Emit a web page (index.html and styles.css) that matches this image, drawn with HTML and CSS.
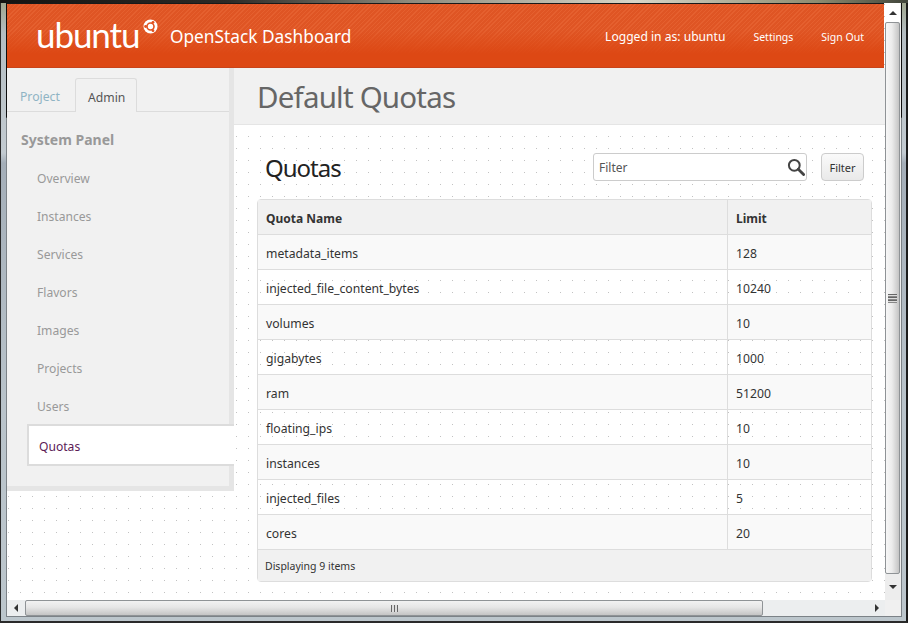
FILE: index.html
```html
<!DOCTYPE html>
<html lang="en">
<head>
<meta charset="utf-8">
<title>Default Quotas</title>
<link rel="stylesheet" href="styles.css">
</head>
<body>
<div class="desktop-strip"></div>
<div class="window">
  <div class="frame-inner">
  <div class="viewport-row">
    <div class="viewport">
      <header class="topbar">
        <div class="brand">
          <span class="wordmark">ubuntu</span>
          <svg class="cof" width="15" height="15" viewBox="0 0 15 15"><circle cx="7.5" cy="7.5" r="7" fill="#fff"/><circle cx="7.5" cy="7.5" r="3.5" fill="none" stroke="#e2521f" stroke-width="1.6"/><circle cx="2.6" cy="7.5" r="1.4" fill="#e2521f"/><circle cx="10" cy="3.3" r="1.4" fill="#e2521f"/><circle cx="10" cy="11.7" r="1.4" fill="#e2521f"/></svg>
          <span class="product">OpenStack Dashboard</span>
        </div>
        <nav class="usernav">
          <span class="logged">Logged in as: ubuntu</span>
          <a class="navlink">Settings</a>
          <a class="navlink">Sign Out</a>
        </nav>
      </header>
      <div class="body-row">
        <aside class="sidebar">
          <div class="tabs">
            <a class="tab">Project</a>
            <a class="tab tab-active">Admin</a>
          </div>
          <h4 class="panel-title">System Panel</h4>
          <ul class="menu">
            <li class="menu-item">Overview</li>
            <li class="menu-item">Instances</li>
            <li class="menu-item">Services</li>
            <li class="menu-item">Flavors</li>
            <li class="menu-item">Images</li>
            <li class="menu-item">Projects</li>
            <li class="menu-item">Users</li>
            <li class="menu-item menu-active">Quotas</li>
          </ul>
        </aside>
        <main class="main">
          <div class="page-header"><h2 class="page-title">Default Quotas</h2></div>
          <div class="content">
            <div class="table-head">
              <h3 class="table-title">Quotas</h3>
              <div class="filter-box">
                <span class="filter-text">Filter</span>
                <svg class="search" width="18" height="18" viewBox="0 0 18 18"><circle cx="7.3" cy="7.3" r="5.4" fill="none" stroke="#444" stroke-width="2"/><path d="M11.3 11.3 16.6 16.6" stroke="#444" stroke-width="2.8" stroke-linecap="round"/></svg>
              </div>
              <button class="filter-btn">Filter</button>
            </div>
            <table class="quota-table">
              <thead><tr><th class="col-name">Quota Name</th><th>Limit</th></tr></thead>
              <tbody>
                <tr><td>metadata_items</td><td>128</td></tr>
                <tr><td>injected_file_content_bytes</td><td>10240</td></tr>
                <tr><td>volumes</td><td>10</td></tr>
                <tr><td>gigabytes</td><td>1000</td></tr>
                <tr><td>ram</td><td>51200</td></tr>
                <tr><td>floating_ips</td><td>10</td></tr>
                <tr><td>instances</td><td>10</td></tr>
                <tr><td>injected_files</td><td>5</td></tr>
                <tr><td>cores</td><td>20</td></tr>
              </tbody>
              <tfoot><tr><td colspan="2">Displaying 9 items</td></tr></tfoot>
            </table>
          </div>
        </main>
      </div>
    </div>
    <div class="vscroll">
      <span class="sb-btn sb-btn-v"><i class="arrow arrow-up"></i></span>
      <span class="vthumb"><i class="grip-v"></i></span>
      <span class="sb-btn sb-btn-vb"><i class="arrow arrow-down"></i></span>
    </div>
  </div>
  <div class="hscroll">
    <span class="sb-btn-h"><i class="arrow arrow-left"></i></span>
    <span class="hthumb"><i class="grip-h"></i></span>
    <span class="htrack"><i class="arrow arrow-right"></i></span>
    <span class="corner"></span>
  </div>
  </div>
</div>
</body>
</html>
```
FILE: styles.css
```css
* { box-sizing: border-box; }
html, body { margin: 0; padding: 0; }
body {
  width: 908px; height: 623px; overflow: hidden;
  background: #1c1c1a;
  font-family: "Noto Sans", "DejaVu Sans", sans-serif;
}
.desktop-strip {
  height: 3px;
  background: linear-gradient(90deg, #141412 0, #2c2a26 25%, #8d8a7c 45%, #d8d6c8 70%, #8d8c70 90%, #40443a 100%);
}
.window {
  height: 620px;
  padding: 0 4px 4px 5px;
  background: linear-gradient(#9fa68e 0, #b4bdc2 30px, #c3cbd1 150px, #a4aeb8 160px, #b9c3ca 400px, #bcc6cc 100%);
  border-left: 1px solid #2a2a2a;
  border-right: 2px solid #1c1c1c;
  border-bottom: 2px solid #2a2a2a;
}
.frame-inner {
  width: 896px;
  border-style: solid;
  border-width: 0 1px 1px 1px;
  border-image: linear-gradient(#0d0d0d 0, #0d0d0d 115px, #7c8287 116px, #7c8287 100%) 1;
}
.viewport-row { display: flex; height: 597px; }
.viewport {
  width: 878px; height: 597px; overflow: hidden;
  background-color: #fff;
  background-image: conic-gradient(from 270deg at 1px 1px, #c2c2c2 90deg, #fff 0);
  background-size: 12px 12px;
  background-position: 1px 1px;
}
.topbar {
  width: 877px; height: 65px;
  display: flex; align-items: flex-start; justify-content: space-between;
  border-top: 1px solid #191919;
  border-bottom: 1px solid #c9441a;
  background:
    linear-gradient(180deg, rgba(221,72,20,0) 0, rgba(221,72,20,0) 26px, #dd4814 50px),
    repeating-linear-gradient(135deg, #e5602f 0, #e5602f 1px, #df5524 1px, #df5524 3px);
  color: #fff;
}
.brand { display: flex; align-items: flex-start; padding-left: 29px; }
.wordmark { font-family: Lato, sans-serif; font-size: 35px; line-height: 40px; margin-top: 10px; letter-spacing: -1.1px; width: 107px; }
.cof { margin: 15px 0 0 0; flex: none; }
.product { font-size: 17.3px; line-height: 24px; margin: 21px 0 0 12px; white-space: nowrap; }
.usernav { display: flex; align-items: center; padding: 23px 20px 0 0; height: 43px; }
.logged { font-size: 12.1px; margin: 0 28px 2px 0; }
.navlink { font-size: 10.5px; }
.navlink + .navlink { margin-left: 28px; }
.body-row { display: flex; align-items: flex-start; }
.sidebar {
  width: 227px; height: 423px; flex: none;
  background: #f1f1f1;
  border-right: 5px solid #e5e5e5;
  border-bottom: 5px solid #e5e5e5;
  position: relative;
}
.tabs {
  height: 44px; padding: 10px 0 0 1px;
  display: flex; border-bottom: 1px solid #dcdcdc;
}
.tab {
  width: 67px; padding-top: 10px; padding-left: 12px;
  font-size: 12.2px; color: #8fb4c4; line-height: 17px;
}
.tab-active {
  width: 62px; padding-left: 12px; padding-top: 10px; height: 34px;
  color: #555; background: #f1f1f1;
  border: 1px solid #dcdcdc; border-bottom: none; border-radius: 3px 3px 0 0;
}
.panel-title { margin: 18px 0 0 14px; font-size: 14px; line-height: 20px; font-weight: 700; color: #999; }
.menu { list-style: none; margin: 10px 0 0; padding: 0 0 0 20px; }
.menu-item { height: 38px; line-height: 38px; padding-left: 10px; font-size: 12.1px; color: #999; }
.menu-active {
  height: 42px; line-height: 42px; width: 207px; padding-left: 10px;
  background: #fff; color: #5b1a56;
  border: 2px solid #dcdcdc; border-right: none;
  position: relative; z-index: 1; margin-top: -2px;
}
.main { width: 651px; flex: none; }
.page-header { height: 57px; background: #f1f1f1; border-bottom: 1px solid #e5e5e5; padding-left: 23px; }
.page-title { margin: 0; font-size: 29.5px; line-height: 57px; font-weight: 400; color: #666; letter-spacing: -.8px; }
.content { padding: 28px 0 0 23px; width: 638px; }
.table-head { display: flex; align-items: center; height: 28px; margin-bottom: 18px; }
.table-title { margin: 2px 0 0 8px; font-size: 24px; font-weight: 400; color: #222; flex: 1; line-height: 28px; letter-spacing: -1px; }
.filter-box {
  width: 214px; height: 28px; display: flex; align-items: center; justify-content: space-between;
  background: #fff; border: 1px solid #ccc; border-radius: 3px; padding: 0 1px 0 5px;
}
.filter-text { font-size: 12px; color: #555; }
.filter-btn {
  width: 43px; height: 28px; margin: 0 8px 0 14px; padding: 0;
  font: 11px "Noto Sans", sans-serif; color: #333;
  background: linear-gradient(#fafafa, #e9e9e9);
  border: 1px solid #ccc; border-radius: 4px;
}
.quota-table {
  width: 615px; border-collapse: separate; border-spacing: 0; table-layout: fixed;
  border: 1px solid #ddd; border-radius: 4px; font-size: 12.2px; color: #333;
}
.quota-table th, .quota-table td { height: 35px; padding: 2px 8px 0; text-align: left; border-bottom: 1px solid #ddd; }
.quota-table th { background: #f1f1f1; font-weight: 700; font-size: 12px; }
.col-name { width: 470px; }
.quota-table th:first-child, .quota-table tbody td:first-child { border-right: 1px solid #ddd; }
.quota-table tbody tr:nth-child(odd) td { background: #f9f9f9; }
.quota-table tfoot td { height: 31px; padding: 0 8px 0 7px; background: #f1f1f1; border-bottom: none; font-size: 10.5px; }
.vscroll { width: 16px; display: flex; flex-direction: column; background: #f0f0f0; }
.sb-btn { display: flex; align-items: center; justify-content: center; flex: none; width: 15px; }
.sb-btn-v { height: 19px; background: #fff; }
.sb-btn-vb { flex: 1; background: #ededed; }
.vthumb {
  width: 15px; height: 552px; flex: none; display: flex; align-items: center; justify-content: center;
  background: linear-gradient(90deg, #f7f7f7, #ececec 45%, #c4c4c4);
  border: 1px solid #8f9396; border-radius: 2px;
}
.grip-v { width: 9px; height: 9px; background: repeating-linear-gradient(#666 0, #666 1px, #ddd 1px, #ddd 2px, #888 2px, #888 3px); }
.hscroll { display: flex; height: 16px; background: #eceeef; }
.sb-btn-h { width: 18px; display: flex; align-items: center; justify-content: center; }
.hthumb {
  width: 738px; display: flex; align-items: center; justify-content: center;
  background: linear-gradient(#f2f2f2, #e6e6e6 45%, #c4c4c4);
  border: 1px solid #8f9396; border-radius: 2px;
}
.grip-h { width: 7px; height: 7px; background: repeating-linear-gradient(90deg, #666 0, #666 1px, #ddd 1px, #ddd 3px); }
.htrack { width: 122px; display: flex; align-items: center; justify-content: flex-end; padding-right: 6px; }
.corner { width: 16px; background: #f0f0f0; }
.arrow { display: block; width: 0; height: 0; border: 4px solid transparent; }
.arrow-up { border-top: 0; border-bottom-color: #333; }
.arrow-down { border-bottom: 0; border-top-color: #333; }
.arrow-left { border-left: 0; border-right-color: #333; }
.arrow-right { border-right: 0; border-left-color: #333; }
```
